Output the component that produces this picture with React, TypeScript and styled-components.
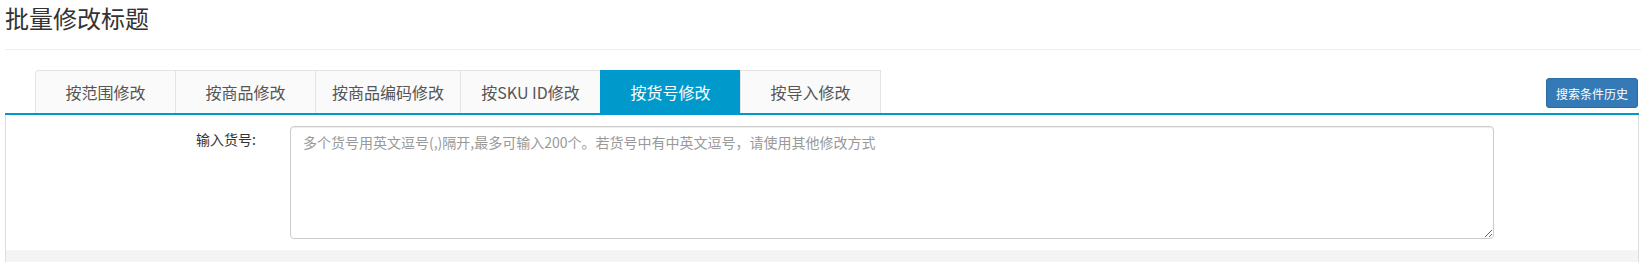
import React from 'react';
import styled, { createGlobalStyle } from 'styled-components';

const COLORS = {
  text: '#333',
  tabText: '#555',
  tabBg: '#fafafa',
  tabBorder: '#e3e3e3',
  active: '#0099cc',
  btn: '#337ab7',
  btnBorder: '#2e6da4',
  line: '#eee',
  panelBorder: '#ddd',
  footer: '#f4f4f4',
};

const GlobalStyle = createGlobalStyle`
  body {
    margin: 0;
    background: #fff;
    font-family: "Noto Sans CJK SC", "Microsoft YaHei", "Noto Sans", sans-serif;
    color: ${COLORS.text};
  }
`;

const Page = styled.div`
  padding: 0 2px 0 5px;
`;

const Title = styled.h3`
  margin: 0;
  padding-top: 4px;
  font-size: 24px;
  line-height: 28px;
  font-weight: 400;
  color: ${COLORS.text};
`;

const Divider = styled.hr`
  margin: 17px -2px 20px 0;
  border: 0;
  border-top: 1px solid ${COLORS.line};
`;

const TabBar = styled.div`
  display: flex;
  align-items: flex-end;
  justify-content: space-between;
  border-bottom: 2px solid ${COLORS.active};
`;

const Tabs = styled.ul`
  display: flex;
  margin: 0 0 0 30px;
  padding: 0;
  list-style: none;
`;

const Tab = styled.li<{ $active?: boolean }>`
  box-sizing: border-box;
  min-width: 141px;
  height: 43px;
  padding: 0 16px;
  display: flex;
  align-items: center;
  justify-content: center;
  font-size: 16px;
  white-space: nowrap;
  cursor: pointer;
  background: ${(p) => (p.$active ? COLORS.active : COLORS.tabBg)};
  color: ${(p) => (p.$active ? '#fff' : COLORS.tabText)};
  border: 1px solid ${(p) => (p.$active ? COLORS.active : COLORS.tabBorder)};
  border-bottom: 0;
  margin-left: -1px;

  &:first-child {
    margin-left: 0;
    border-top-left-radius: 4px;
  }
`;

const HistoryButton = styled.button`
  height: 30px;
  margin: 0 1px 5px 0;
  padding: 0 9px;
  font-family: inherit;
  font-size: 12px;
  color: #fff;
  background: ${COLORS.btn};
  border: 1px solid ${COLORS.btnBorder};
  border-radius: 3px;
  cursor: pointer;
`;

const Panel = styled.div`
  border-left: 1px solid ${COLORS.panelBorder};
  border-right: 1px solid ${COLORS.panelBorder};
  background: #fff;
`;

const FormRow = styled.div`
  display: grid;
  grid-template-columns: 252px 1204px;
  column-gap: 32px;
  padding: 11px 0;
`;

const Label = styled.label`
  padding: 3px 2px 0 0;
  text-align: right;
  font-size: 14px;
  line-height: 20px;
  color: ${COLORS.text};
`;

const TextArea = styled.textarea`
  box-sizing: border-box;
  width: 1204px;
  height: 113px;
  padding: 5px 12px;
  font-family: inherit;
  font-size: 14px;
  line-height: 20px;
  color: #555;
  border: 1px solid #ccc;
  border-radius: 4px;
  box-shadow: inset 0 1px 1px rgba(0, 0, 0, 0.075);
  outline: none;

  &::placeholder {
    color: #999;
  }
`;

const Footer = styled.div`
  height: 40px;
  background: ${COLORS.footer};
`;

const tabs = ['按范围修改', '按商品修改', '按商品编码修改', '按SKU ID修改', '按货号修改', '按导入修改'];

export default function App() {
  const active = 4;
  return (
    <Page>
      <GlobalStyle />
      <Title>批量修改标题</Title>
      <Divider />
      <TabBar>
        <Tabs>
          {tabs.map((t, i) => (
            <Tab key={t} $active={i === active}>
              {t}
            </Tab>
          ))}
        </Tabs>
        <HistoryButton>搜索条件历史</HistoryButton>
      </TabBar>
      <Panel>
        <FormRow>
          <Label>输入货号:</Label>
          <TextArea placeholder="多个货号用英文逗号(,)隔开,最多可输入200个。若货号中有中英文逗号，请使用其他修改方式" />
        </FormRow>
        <Footer />
      </Panel>
    </Page>
  );
}
